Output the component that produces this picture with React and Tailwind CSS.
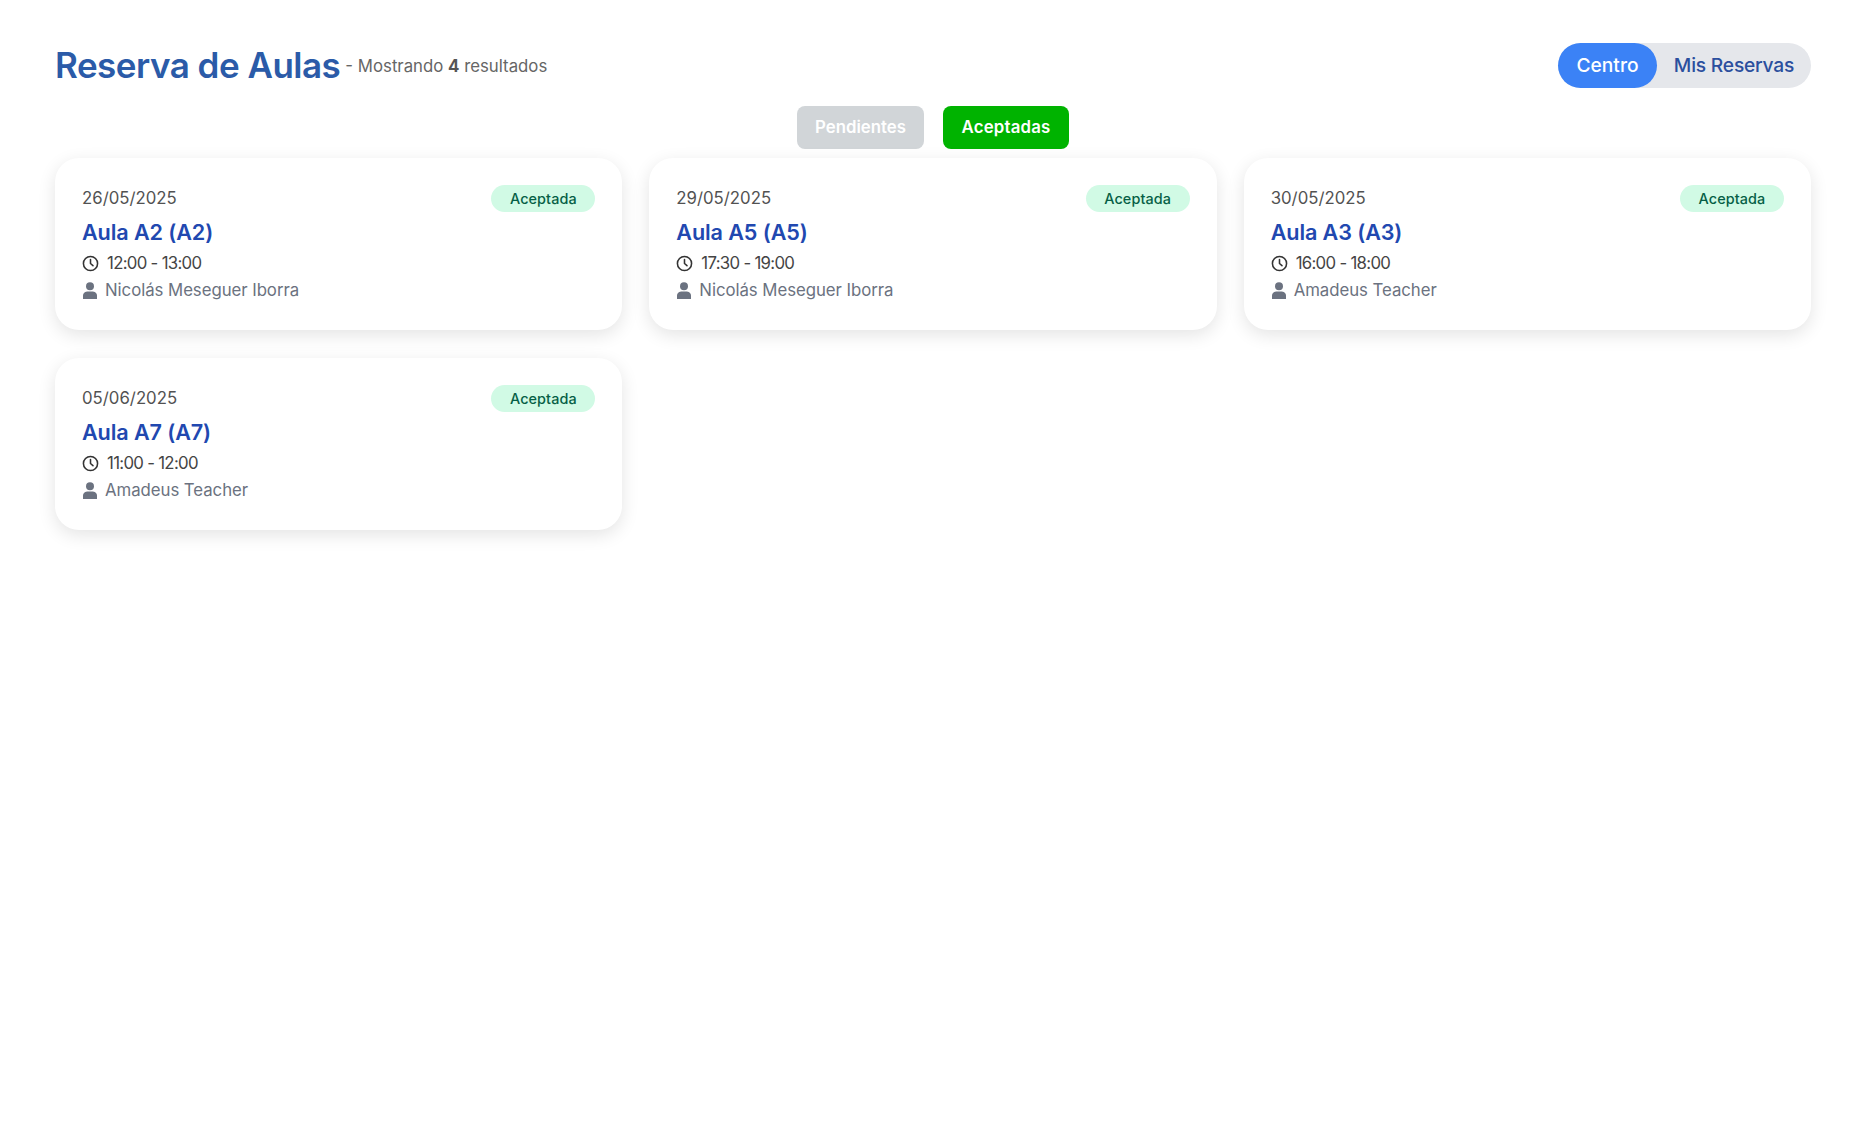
import React from 'react';

const reservas = [
  { id: 1, fecha: '26/05/2025', aula: 'Aula A2 (A2)', hora: '12:00 - 13:00', profesor: 'Nicolás Meseguer Iborra' },
  { id: 2, fecha: '29/05/2025', aula: 'Aula A5 (A5)', hora: '17:30 - 19:00', profesor: 'Nicolás Meseguer Iborra' },
  { id: 3, fecha: '30/05/2025', aula: 'Aula A3 (A3)', hora: '16:00 - 18:00', profesor: 'Amadeus Teacher' },
  { id: 4, fecha: '05/06/2025', aula: 'Aula A7 (A7)', hora: '11:00 - 12:00', profesor: 'Amadeus Teacher' },
];

const ClockIcon = () => (
  <svg className="w-[17px] h-[17px] shrink-0 text-[#333333]" viewBox="0 0 24 24" fill="none" stroke="currentColor" strokeWidth="2.2" strokeLinecap="round" strokeLinejoin="round">
    <circle cx="12" cy="12" r="10" />
    <path d="M12 6.5V12l3.5 3" />
  </svg>
);

const UserIcon = () => (
  <svg className="w-[16px] h-[17px] shrink-0 text-[#6b7280]" viewBox="0 0 16 17" fill="currentColor">
    <circle cx="8" cy="4.2" r="4" />
    <path d="M1 17v-3.2C1 11 3.4 9.6 6 9.6h4c2.6 0 5 1.4 5 4.2V17z" />
  </svg>
);

const Card = ({ reserva }) => (
  <div className="bg-white rounded-[24px] h-[172px] pt-[27px] px-[27px] shadow-[0_5px_18px_rgba(0,0,0,0.11)]">
    <div className="flex items-center justify-between h-[27px]">
      <span className="text-[16.8px] text-[#525252]">{reserva.fecha}</span>
      <span className="w-[104px] h-[27px] flex items-center justify-center rounded-full bg-[#d1fae5] text-[#065f46] text-[14.4px] font-medium tracking-[0.1px]">Aceptada</span>
    </div>
    <h3 className="mt-[3px] text-[21.6px] leading-[34px] font-semibold text-[#2148b0] tracking-[-0.1px]">{reserva.aula}</h3>
    <div className="flex items-center gap-[8px] h-[28px] text-[16.8px] text-[#444444] tracking-[-0.7px] pt-[1px]">
      <ClockIcon />
      <span>{reserva.hora}</span>
    </div>
    <div className="flex items-center gap-[7px] h-[27px] text-[16.8px] text-[#6b7280] tracking-[-0.05px]">
      <UserIcon />
      <span>{reserva.profesor}</span>
    </div>
  </div>
);

export default function App() {
  return (
    <div className="min-h-screen bg-white pl-[55px] pr-[54px] pt-[43px] font-['Inter','Noto_Sans',sans-serif]">
      <div className="flex items-center justify-between h-[45px]">
        <div className="flex items-center gap-[5px]">
          <h1 className="text-[35px] font-semibold text-[#2b5ba8] leading-[45px] tracking-[-0.5px]">Reserva de Aulas</h1>
          <span className="text-[16.8px] text-[#666666] mt-[2px]">- Mostrando <b className="text-[#555555]">4</b> resultados</span>
        </div>
        <div className="flex h-[45px] w-[253px] rounded-full bg-[#e5e7eb] text-[19.2px] font-medium">
          <button className="w-[99px] rounded-full bg-[#3b82f6] text-white">Centro</button>
          <button className="flex-1 text-[#2b4f9e] tracking-[-0.2px]">Mis Reservas</button>
        </div>
      </div>
      <div className="flex justify-center gap-[19px] mt-[18px]">
        <button className="w-[127px] h-[43px] rounded-[8px] bg-[#d1d5d8] text-white text-[16.8px] font-semibold">Pendientes</button>
        <button className="w-[126px] h-[43px] rounded-[8px] bg-[#00b300] text-white text-[16.8px] font-semibold tracking-[0.2px]">Aceptadas</button>
      </div>
      <div className="grid grid-cols-3 gap-x-[27px] gap-y-[28px] mt-[9px]">
        {reservas.map((r) => (
          <Card key={r.id} reserva={r} />
        ))}
      </div>
    </div>
  );
}
